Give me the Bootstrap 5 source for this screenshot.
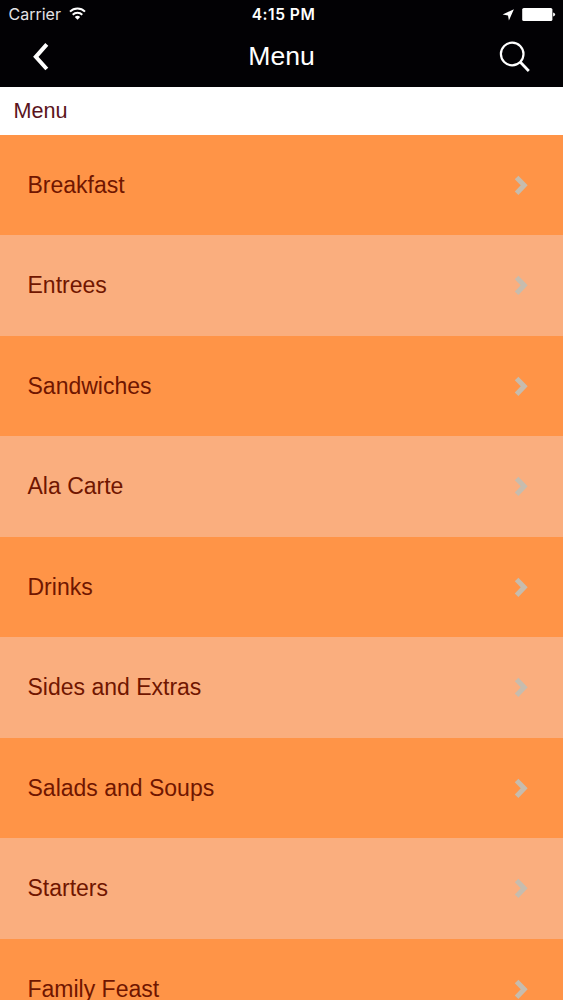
<!DOCTYPE html>
<html lang="en">
<head>
<meta charset="utf-8">
<meta name="viewport" content="width=device-width, initial-scale=1">
<title>Menu</title>
<link href="https://cdn.jsdelivr.net/npm/bootstrap@5.3.0/dist/css/bootstrap.min.css" rel="stylesheet">
<style>
  body { font-family: "Liberation Sans", Arial, sans-serif; background: #ff9447; height: 1000px; }
  .topbar { background: #020104; height: 87px; }
  .status { height: 29px; font-family: Inter, sans-serif; font-size: 16px; line-height: 29px; padding: 0 7.5px 0 8.5px; color: #e4e3e6; }
  .status .clock { font-weight: 600; font-size: 15.6px; letter-spacing: .5px; padding-left: 3px; }
  .titlebar { height: 58px; padding: 0 32px 4px; }
  .page-title { font-size: 26.6px; line-height: 55px; padding-top: 1px; }
  .section-title { height: 47.5px; line-height: 48px; font-size: 21.6px; padding-left: 13.5px; color: #5a141c; }
  .menu-row { height: 100.5px; padding: 0 33.5px 0 27.5px; font-size: 23px; color: #701600; background: #ff9447; }
  .menu-row:nth-child(even) { background: #faae7e; }
  .menu-row:hover { color: #701600; }
</style>
</head>
<body class="overflow-hidden">
<header class="topbar text-white">
  <div class="status row g-0">
    <div class="col d-flex align-items-center">
      <span class="carrier">Carrier</span>
      <svg class="ms-2 mb-1" width="17" height="14" viewBox="0 0 17 14" fill="none" stroke="#fff" stroke-width="2">
        <path d="M1 5.6a10.7 10.7 0 0 1 15 0M3.7 8.8a6.9 6.9 0 0 1 9.6 0"/>
        <path d="M8.5 13.8 5.8 11a3.9 3.9 0 0 1 5.4 0z" fill="#fff" stroke="none"/>
      </svg>
    </div>
    <div class="col-auto clock text-white">4:15 PM</div>
    <div class="col d-flex align-items-center justify-content-end">
      <svg width="12" height="12" viewBox="0 0 12 12" fill="#fff"><path d="M11.9.2 6.9 11.4 6 6.4.6 5.4z"/></svg>
      <svg width="34" height="14" viewBox="0 0 34 14" class="ms-2" fill="#fff"><rect x=".2" y="0" width="30.2" height="13" rx="1.6"/><path d="M31.1 4.4q2 .5 2 2.1t-2 2.1z"/></svg>
    </div>
  </div>
  <div class="titlebar d-flex align-items-center justify-content-between">
    <a href="#" aria-label="Back" class="d-flex"><svg width="32" height="30" viewBox="0 0 32 30" fill="none" stroke="#fff" stroke-width="4"><path d="M14.8 3.4 3.8 15.8l11 12.2"/></svg></a>
    <h1 class="page-title fw-normal m-0">Menu</h1>
    <a href="#" aria-label="Search" class="d-flex"><svg width="32" height="32" viewBox="0 0 32 32" fill="none" stroke="#fff"><circle cx="13.2" cy="14" r="11.3" stroke-width="2.2"/><path d="m21.2 22.1 8.6 8.8" stroke-width="2.8"/></svg></a>
  </div>
</header>
<main>
  <h2 class="section-title bg-white fw-normal m-0">Menu</h2>
  <nav id="menu" aria-label="Menu categories"></nav>
</main>
<template id="row">
  <a href="#" class="menu-row d-flex align-items-center justify-content-between text-decoration-none">
    <span></span>
    <svg width="16" height="20" viewBox="0 0 16 20" fill="none" stroke="#c6bcae" stroke-width="5"><path d="m2.6 2.4 7.6 7.9-7.6 7.9"/></svg>
  </a>
</template>
<script>
  const names = ["Breakfast", "Entrees", "Sandwiches", "Ala Carte", "Drinks", "Sides and Extras", "Salads and Soups", "Starters", "Family Feast"];
  const tpl = document.getElementById("row");
  for (const name of names) {
    const node = tpl.content.cloneNode(true);
    node.querySelector("span").textContent = name;
    document.getElementById("menu").append(node);
  }
</script>
<script src="https://cdn.jsdelivr.net/npm/bootstrap@5.3.0/dist/js/bootstrap.bundle.min.js"></script>
</body>
</html>
